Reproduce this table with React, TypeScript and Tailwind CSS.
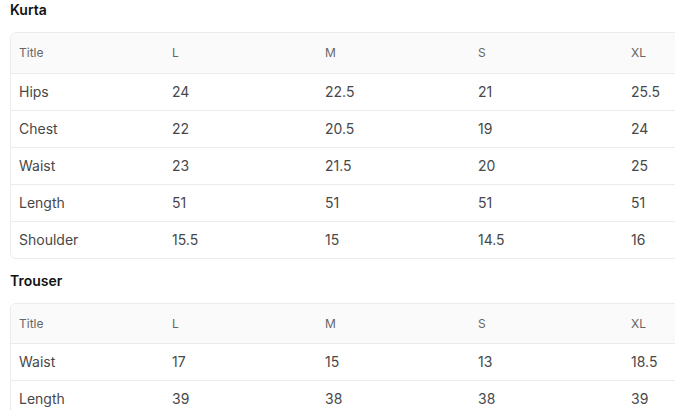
const SIZES = ['L', 'M', 'S', 'XL']

const KURTA: [string, string[]][] = [
  ['Hips', ['24', '22.5', '21', '25.5']],
  ['Chest', ['22', '20.5', '19', '24']],
  ['Waist', ['23', '21.5', '20', '25']],
  ['Length', ['51', '51', '51', '51']],
  ['Shoulder', ['15.5', '15', '14.5', '16']],
]

const TROUSER: [string, string[]][] = [
  ['Waist', ['17', '15', '13', '18.5']],
  ['Length', ['39', '38', '38', '39']],
]

function SizeTable({
  title,
  rows,
  headClass = 'py-[10px]',
}: {
  title: string
  rows: [string, string[]][]
  headClass?: string
}) {
  return (
    <div>
      <h3 className="text-[14px] leading-5 font-semibold text-[#111]">{title}</h3>
      <div className="mt-3 w-[766px] border border-[#ebebeb] rounded-md overflow-hidden">
        <table className="w-full table-fixed border-collapse">
          <thead>
            <tr className="bg-[#fafafa]">
              {['Title', ...SIZES].map((h) => (
                <th
                  key={h}
                  className={`w-[153px] text-left text-[12px] leading-5 font-normal text-[#666] px-2 ${headClass}`}
                >
                  {h}
                </th>
              ))}
            </tr>
          </thead>
          <tbody>
            {rows.map(([name, vals]) => (
              <tr key={name} className="border-t border-[#ebebeb]">
                <td className="text-[14px] leading-5 text-[#484848] px-2 py-2">{name}</td>
                {vals.map((v, i) => (
                  <td key={i} className="text-[14px] leading-5 text-[#484848] px-2 py-2">
                    {v}
                  </td>
                ))}
              </tr>
            ))}
          </tbody>
        </table>
      </div>
    </div>
  )
}

export default function App() {
  return (
    <div className="w-[675px] h-[410px] overflow-hidden bg-white font-['Inter',sans-serif]">
      <div className="pl-[10px] flex flex-col gap-[12px]">
        <SizeTable title="Kurta" rows={KURTA} />
        <SizeTable title="Trouser" rows={TROUSER} headClass="pt-[10px] pb-[9px]" />
      </div>
    </div>
  )
}
